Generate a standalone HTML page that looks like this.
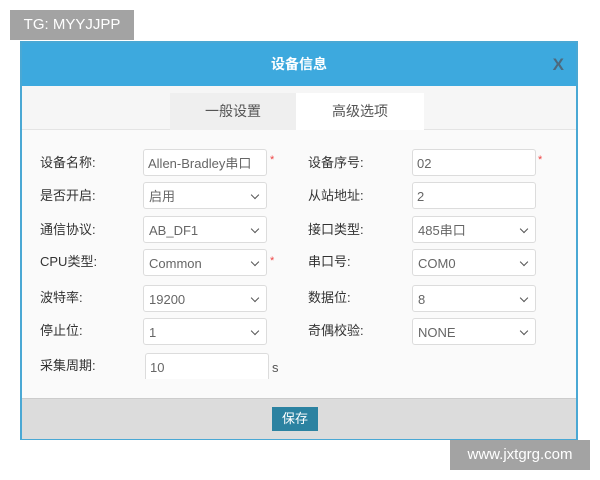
<!DOCTYPE html>
<html><head><meta charset="utf-8"><style>
body{margin:0;width:600px;height:480px;background:#fff;position:relative;overflow:hidden;font-family:"Liberation Sans","Noto Sans CJK SC",sans-serif;}
.a{position:absolute;}
.tg{left:10px;top:10px;width:124px;height:30px;background:#a3a3a3;color:#fff;font-size:15px;line-height:30px;text-align:center;}
.www{left:450px;top:440px;width:140px;height:30px;background:#a3a3a3;color:#fff;font-size:15px;line-height:30px;text-align:center;}
.dlg{left:20px;top:41px;width:554px;height:395px;border:2px solid #4aa8d4;background:#fafafa;}
.hd{left:0;top:0;width:554px;height:43px;background:#3da9de;color:#fff;font-weight:bold;font-size:14px;line-height:43px;text-align:center;}
.x{right:12px;top:0;color:#4d6a7e;font-size:17px;font-weight:bold;line-height:43px;}
.strip{left:0;top:43px;width:554px;height:43px;background:#f6f6f6;border-bottom:1px solid #e4e4e4;}
.t1{left:148px;top:7px;width:126px;height:37px;background:#efefef;color:#555;font-size:14px;line-height:37px;text-align:center;}
.t2{left:274px;top:7px;width:128px;height:37px;background:#fff;color:#555;font-size:14px;line-height:37px;text-align:center;}
.lb{font-size:13px;color:#333;}
.in{width:124px;height:27px;border:1px solid #dcdcdc;border-radius:3px;background:#fff;font-size:13px;color:#666;line-height:28px;padding-left:4px;box-sizing:border-box;}
.sel{padding-left:5px}
.sel:after{content:"";position:absolute;right:8px;top:9px;width:5px;height:5px;border-right:1.3px solid #555;border-bottom:1.3px solid #555;transform:rotate(45deg);}
.st{color:#e44;font-size:11px;}
.ft{left:0;top:355px;width:554px;height:40px;background:#dcdcdc;border-top:1px solid #ccc;}
.btn{left:250px;top:8px;width:46px;height:24px;background:#2b82a1;color:#fff;font-size:13px;line-height:24px;text-align:center;}
</style></head><body>
<div class="a tg">TG: MYYJJPP</div>
<div class="a dlg">
<div class="a hd">设备信息</div><div class="a x">X</div>
<div class="a strip"><div class="a t1">一般设置</div><div class="a t2">高级选项</div></div>
<div class="a ft"><div class="a btn">保存</div></div>
</div>
<div class="a lb" style="left:40px;top:152px">设备名称:</div>
<div class="a in" style="left:143px;top:149px">Allen-Bradley串口</div><div class="a st" style="left:270px;top:154px">*</div>
<div class="a lb" style="left:308px;top:152px">设备序号:</div>
<div class="a in" style="left:412px;top:149px">02</div><div class="a st" style="left:538px;top:154px">*</div>

<div class="a lb" style="left:40px;top:185px">是否开启:</div>
<div class="a in sel" style="left:143px;top:182px">启用</div>
<div class="a lb" style="left:308px;top:185px">从站地址:</div>
<div class="a in" style="left:412px;top:182px">2</div>

<div class="a lb" style="left:40px;top:219px">通信协议:</div>
<div class="a in sel" style="left:143px;top:216px">AB_DF1</div>
<div class="a lb" style="left:308px;top:219px">接口类型:</div>
<div class="a in sel" style="left:412px;top:216px">485串口</div>

<div class="a lb" style="left:40px;top:251px">CPU类型:</div>
<div class="a in sel" style="left:143px;top:249px">Common</div><div class="a st" style="left:270px;top:255px">*</div>
<div class="a lb" style="left:308px;top:251px">串口号:</div>
<div class="a in sel" style="left:412px;top:249px">COM0</div>

<div class="a lb" style="left:40px;top:287px">波特率:</div>
<div class="a in sel" style="left:143px;top:285px">19200</div>
<div class="a lb" style="left:308px;top:287px">数据位:</div>
<div class="a in sel" style="left:412px;top:285px">8</div>

<div class="a lb" style="left:40px;top:320px">停止位:</div>
<div class="a in sel" style="left:143px;top:318px">1</div>
<div class="a lb" style="left:308px;top:320px">奇偶校验:</div>
<div class="a in sel" style="left:412px;top:318px">NONE</div>

<div class="a lb" style="left:40px;top:355px">采集周期:</div>
<div class="a in" style="left:145px;top:353px;border-bottom:none;border-radius:3px 3px 0 0;height:26px">10</div>
<div class="a lb" style="left:272px;top:360px;color:#555">s</div>
<div class="a www">www.jxtgrg.com</div>
</body></html>
